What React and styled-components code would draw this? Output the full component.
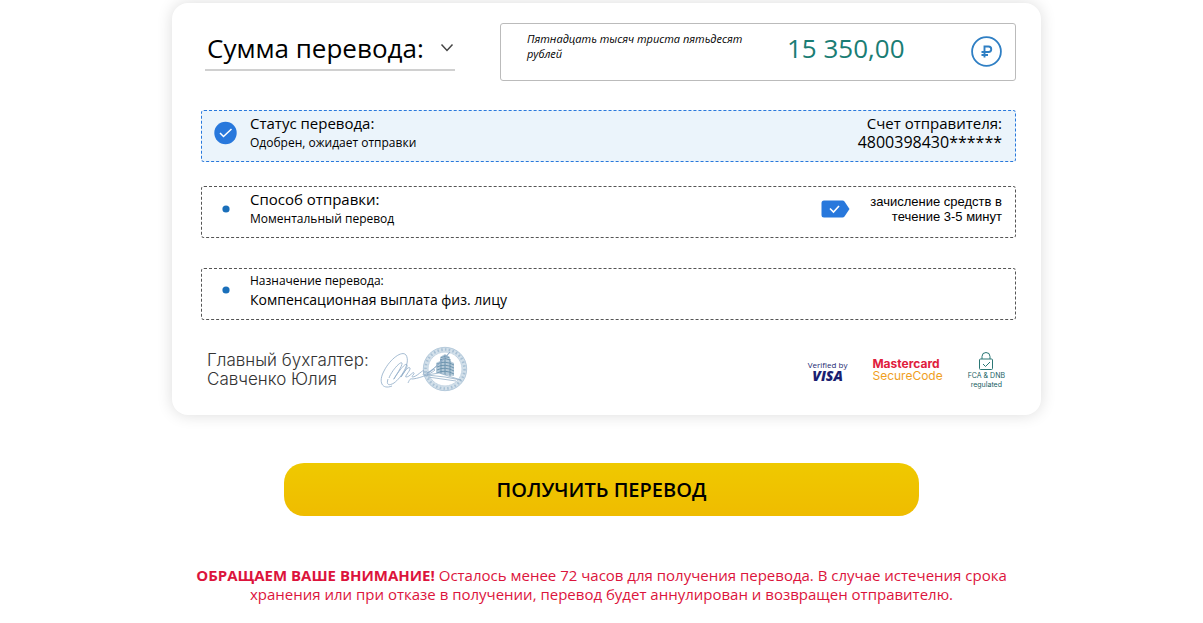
import React from 'react';
import styled, { createGlobalStyle } from 'styled-components';

const GlobalStyle = createGlobalStyle`
    * {
        box-sizing: border-box;
    }

    body {
        margin: 0;
        background: #fff;
        color: #000;
        font-family: 'Open Sans', 'Noto Sans', sans-serif;
    }

    p {
        margin: 0;
    }
`

const Page = styled.main`
    padding: 3px 16px 16px;
`

const CardWrap = styled.div`
    padding-left: 10px;
`

const Card = styled.section`
    max-width: 869px;
    margin: 0 auto;
    padding: 20px 25px 21px 29px;
    border-radius: 16px;
    background: #fff;
    box-shadow: 0 0 16px rgba(0, 0, 0, 0.14);
`

const Header = styled.div`
    display: flex;
    justify-content: space-between;
    align-items: flex-start;
    gap: 16px;
    margin-bottom: 29px;
`

const SumButton = styled.button`
    display: flex;
    align-items: center;
    justify-content: space-between;
    width: 250px;
    height: 48px;
    margin-left: 4px;
    padding: 4px 0 0 2px;
    border: 0;
    border-bottom: 2px solid #d0d0d0;
    background: none;
    font-family: inherit;
    font-size: 26px;
    white-space: nowrap;
    color: #000;
    cursor: pointer;
`

const AmountBox = styled.div`
    display: flex;
    align-items: flex-start;
    flex: 0 1 516px;
    height: 58px;
    padding: 7px 13px 0 26px;
    border: 1px solid #bbb;
    border-radius: 3px;
`

const AmountWords = styled.p`
    width: 240px;
    padding-right: 16px;
    font-size: 11px;
    font-style: italic;
    line-height: 15px;
`

const Amount = styled.p`
    flex: 1;
    padding-left: 20px;
    font-size: 26px;
    line-height: 34px;
    white-space: nowrap;
    color: #1a7d74;
`

const Currency = styled.svg`
    margin-top: 4px;
`

const Row = styled.div`
    display: flex;
    align-items: flex-start;
    height: 52px;
    margin-bottom: ${props => props.$gap || 24}px;
    padding: ${props => props.$top || 3}px 13px 0 0;
    border: 1px dashed ${props => props.$active ? '#2878dc' : '#555'};
    border-radius: 3px;
    background: ${props => props.$active ? '#ebf4fb' : '#fff'};
`

const Mark = styled.div`
    display: flex;
    justify-content: center;
    align-items: center;
    width: 48px;
    height: 38px;
`

const RowText = styled.div`
    flex: 1;
`

const Text = styled.p`
    font-size: ${props => props.$size}px;
    line-height: 19px;
`

const Account = styled.div`
    text-align: right;
`

const Arrival = styled.p`
    width: 152px;
    padding-top: 4px;
    font-family: 'Liberation Sans', Arial, sans-serif;
    font-size: 13px;
    line-height: 15px;
    text-align: right;
`

const Tag = styled.svg`
    margin-top: 10px;
`

const Footer = styled.div`
    display: flex;
    align-items: center;
    padding: 0 11px 0 6px;
`

const Accountant = styled.p`
    width: 173px;
    font-family: Inter, sans-serif;
    font-size: 17px;
    font-weight: 300;
    line-height: 19px;
    white-space: nowrap;
    color: #333;
`

const Logos = styled.div`
    display: flex;
    align-items: center;
    gap: 25px;
    margin-left: auto;
`

const Visa = styled.div`
    font-size: 8px;
    line-height: 11px;
    text-align: center;
    color: #1a1f71;

    strong {
        display: block;
        font-size: 14px;
        font-style: italic;
        font-weight: 800;
        line-height: 12px;
    }
`

const Mastercard = styled.div`
    font-family: Inter, sans-serif;
    font-size: 12px;
    line-height: 12px;
    color: #f0a01e;

    strong {
        display: block;
        font-weight: 700;
        color: #e0203c;
    }
`

const Regulated = styled.div`
    display: flex;
    flex-direction: column;
    align-items: center;
    font-family: Inter, sans-serif;
    font-size: 7px;
    line-height: 9px;
    text-align: center;
    color: #16605f;
`

const GetButton = styled.button`
    display: block;
    width: 100%;
    max-width: 635px;
    height: 53px;
    margin: 48px auto;
    padding: 0;
    border: 0;
    border-radius: 20px;
    background: linear-gradient(#efc900, #efbc00);
    font-family: inherit;
    font-size: 20px;
    font-weight: 600;
    color: #000;
    cursor: pointer;
`

const Warning = styled.p`
    max-width: 869px;
    margin: 0 auto;
    padding: 2px 16px 0;
    font-size: 15px;
    line-height: 19px;
    text-align: center;
    color: #dc143c;
`

function Dot() {
    return (
        <svg width="8" height="8" viewBox="0 0 8 8">
            <circle cx="4" cy="4" r="3.6" fill="#1a6fba" />
        </svg>
    )
}

function Stamp() {
    return (
        <svg width="88" height="48" viewBox="0 0 88 48" fill="none">
            <g stroke="#a9c1d5">
                <circle cx="65" cy="23" r="19.5" strokeWidth="4.5" stroke="#d3e0ea" />
                <circle cx="65" cy="23" r="19.5" strokeWidth="2.6" strokeDasharray="1.6 2.2" />
                <circle cx="65" cy="23" r="21.7" strokeWidth="0.8" />
                <circle cx="65" cy="23" r="17" strokeWidth="0.7" />
            </g>
            <path d="M56 17l4-2v-4l5-3 5 3v4l4 2v13l-9-1-9-2z" fill="#b4c9d8" />
            <path d="M57 18q8-4 17 1M57 21q8-4 17 1M57 24q8-4 17 1M57 27q8-4 17 1M60 14q5-3 10 0M61 11.5q4-2 8 0M65 9v20M61 13v16M70 13v17" stroke="#6790ab" strokeWidth="0.9" />
            <path d="M47 29l12-2 22 7-16-3zM48 31l28 4" stroke="#94b0c8" strokeWidth="0.8" fill="#fff" />
            <path d="M12 40C2 44-2 36 4 25 10 13 22 4 26 9c5 8-5 23-12 28-5 3-8 2-6-4M9 32c2-6 11-17 13-15 1 3-10 18-8 16 2-4 12-18 13-14 1 3-7 13-6 12 3-5 7-11 9-9 1 2-6 9-4 9 4 0 7-6 8-4 1 1-4 4-1 4 5-1 10-8 11-6 0 3-2 4 0 4 9-3 17-15 26-23-5 7-13 15-23 21 5-1 6-5 8-3-5 5-19 9-23 9-2-1-3 2-4 4" stroke="#8eabc7" strokeWidth="0.8" strokeLinejoin="round" />
        </svg>
    )
}

export default function App() {
    return (
        <>
            <GlobalStyle />
            <Page>
                <CardWrap>
                    <Card>
                        <Header>
                            <SumButton type="button">
                                Сумма перевода:
                                <svg width="15" height="12" viewBox="0 0 15 12" fill="none">
                                    <path d="M1.5 2.5l5.5 6 5.5-6" stroke="#444" strokeWidth="1.5" />
                                </svg>
                            </SumButton>
                            <AmountBox>
                                <AmountWords>Пятнадцать тысяч триста пятьдесят рублей</AmountWords>
                                <Amount>15 350,00</Amount>
                                <Currency width="32" height="32" viewBox="0 0 32 32" fill="none" stroke="#2f7fc4">
                                    <circle cx="16.5" cy="16.5" r="14.4" strokeWidth="1.8" />
                                    <path d="M14.5 22.5V11.5h4a2.700 2.700 0 0 1 0 5.5H11.5M11.5 20h6.5" strokeWidth="1.9" />
                                </Currency>
                            </AmountBox>
                        </Header>

                        <Row $active>
                            <Mark>
                                <svg width="24" height="24" viewBox="0 0 24 24" fill="none">
                                    <circle cx="11.5" cy="12" r="11.2" fill="#2878dc" />
                                    <path d="M6 12l3.500 3.500 8-7.500" stroke="#fff" strokeWidth="1.5" />
                                </svg>
                            </Mark>
                            <RowText>
                                <Text $size={15}>Статус перевода:</Text>
                                <Text $size={12}>Одобрен, ожидает отправки</Text>
                            </RowText>
                            <Account>
                                <Text $size={15}>Счет отправителя:</Text>
                                <Text $size={16}>4800398430******</Text>
                            </Account>
                        </Row>

                        <Row $gap={30}>
                            <Mark><Dot /></Mark>
                            <RowText>
                                <Text $size={15}>Способ отправки:</Text>
                                <Text $size={12}>Моментальный перевод</Text>
                            </RowText>
                            <Tag width="29" height="18" viewBox="0 0 29 18" fill="none">
                                <path d="M3 .5h18.500q1.200 0 2 1L28.500 9l-5 7.500q-.8 1-2 1H3Q.5 17.500.5 15V3Q.5.500 3 .5z" fill="#2878dc" />
                                <path d="M9 8.500l3.500 3.500L18 6" stroke="#fff" strokeWidth="1.6" />
                            </Tag>
                            <Arrival>зачисление средств в течение 3-5 минут</Arrival>
                        </Row>

                        <Row $gap={26} $top={2}>
                            <Mark><Dot /></Mark>
                            <RowText>
                                <Text $size={12}>Назначение перевода:</Text>
                                <Text $size={14}>Компенсационная выплата физ. лицу</Text>
                            </RowText>
                        </Row>

                        <Footer>
                            <Accountant>Главный бухгалтер:<br />Савченко Юлия</Accountant>
                            <Stamp />
                            <Logos>
                                <Visa>Verified by<strong>VISA</strong></Visa>
                                <Mastercard><strong>Mastercard</strong>SecureCode</Mastercard>
                                <Regulated>
                                    <svg width="16" height="19" viewBox="0 0 16 19" fill="none" stroke="#2b7775">
                                        <path d="M4 7V4.500a4 4 0 0 1 8 0V7M3 7h10.500q1 0 1 1v8.500q0 1-1 1h-11q-1 0-1-1V8q0-1 1-1zM5 12l2.500 2.500L12 10" />
                                    </svg>
                                    <span>FCA &amp; DNB<br />regulated</span>
                                </Regulated>
                            </Logos>
                        </Footer>
                    </Card>
                </CardWrap>

                <GetButton type="button">ПОЛУЧИТЬ ПЕРЕВОД</GetButton>

                <Warning>
                    <b>ОБРАЩАЕМ ВАШЕ ВНИМАНИЕ!</b> Осталось менее 72 часов для получения перевода. В случае истечения срока хранения или при отказе в получении, перевод будет аннулирован и возвращен отправителю.
                </Warning>
            </Page>
        </>
    )
}
